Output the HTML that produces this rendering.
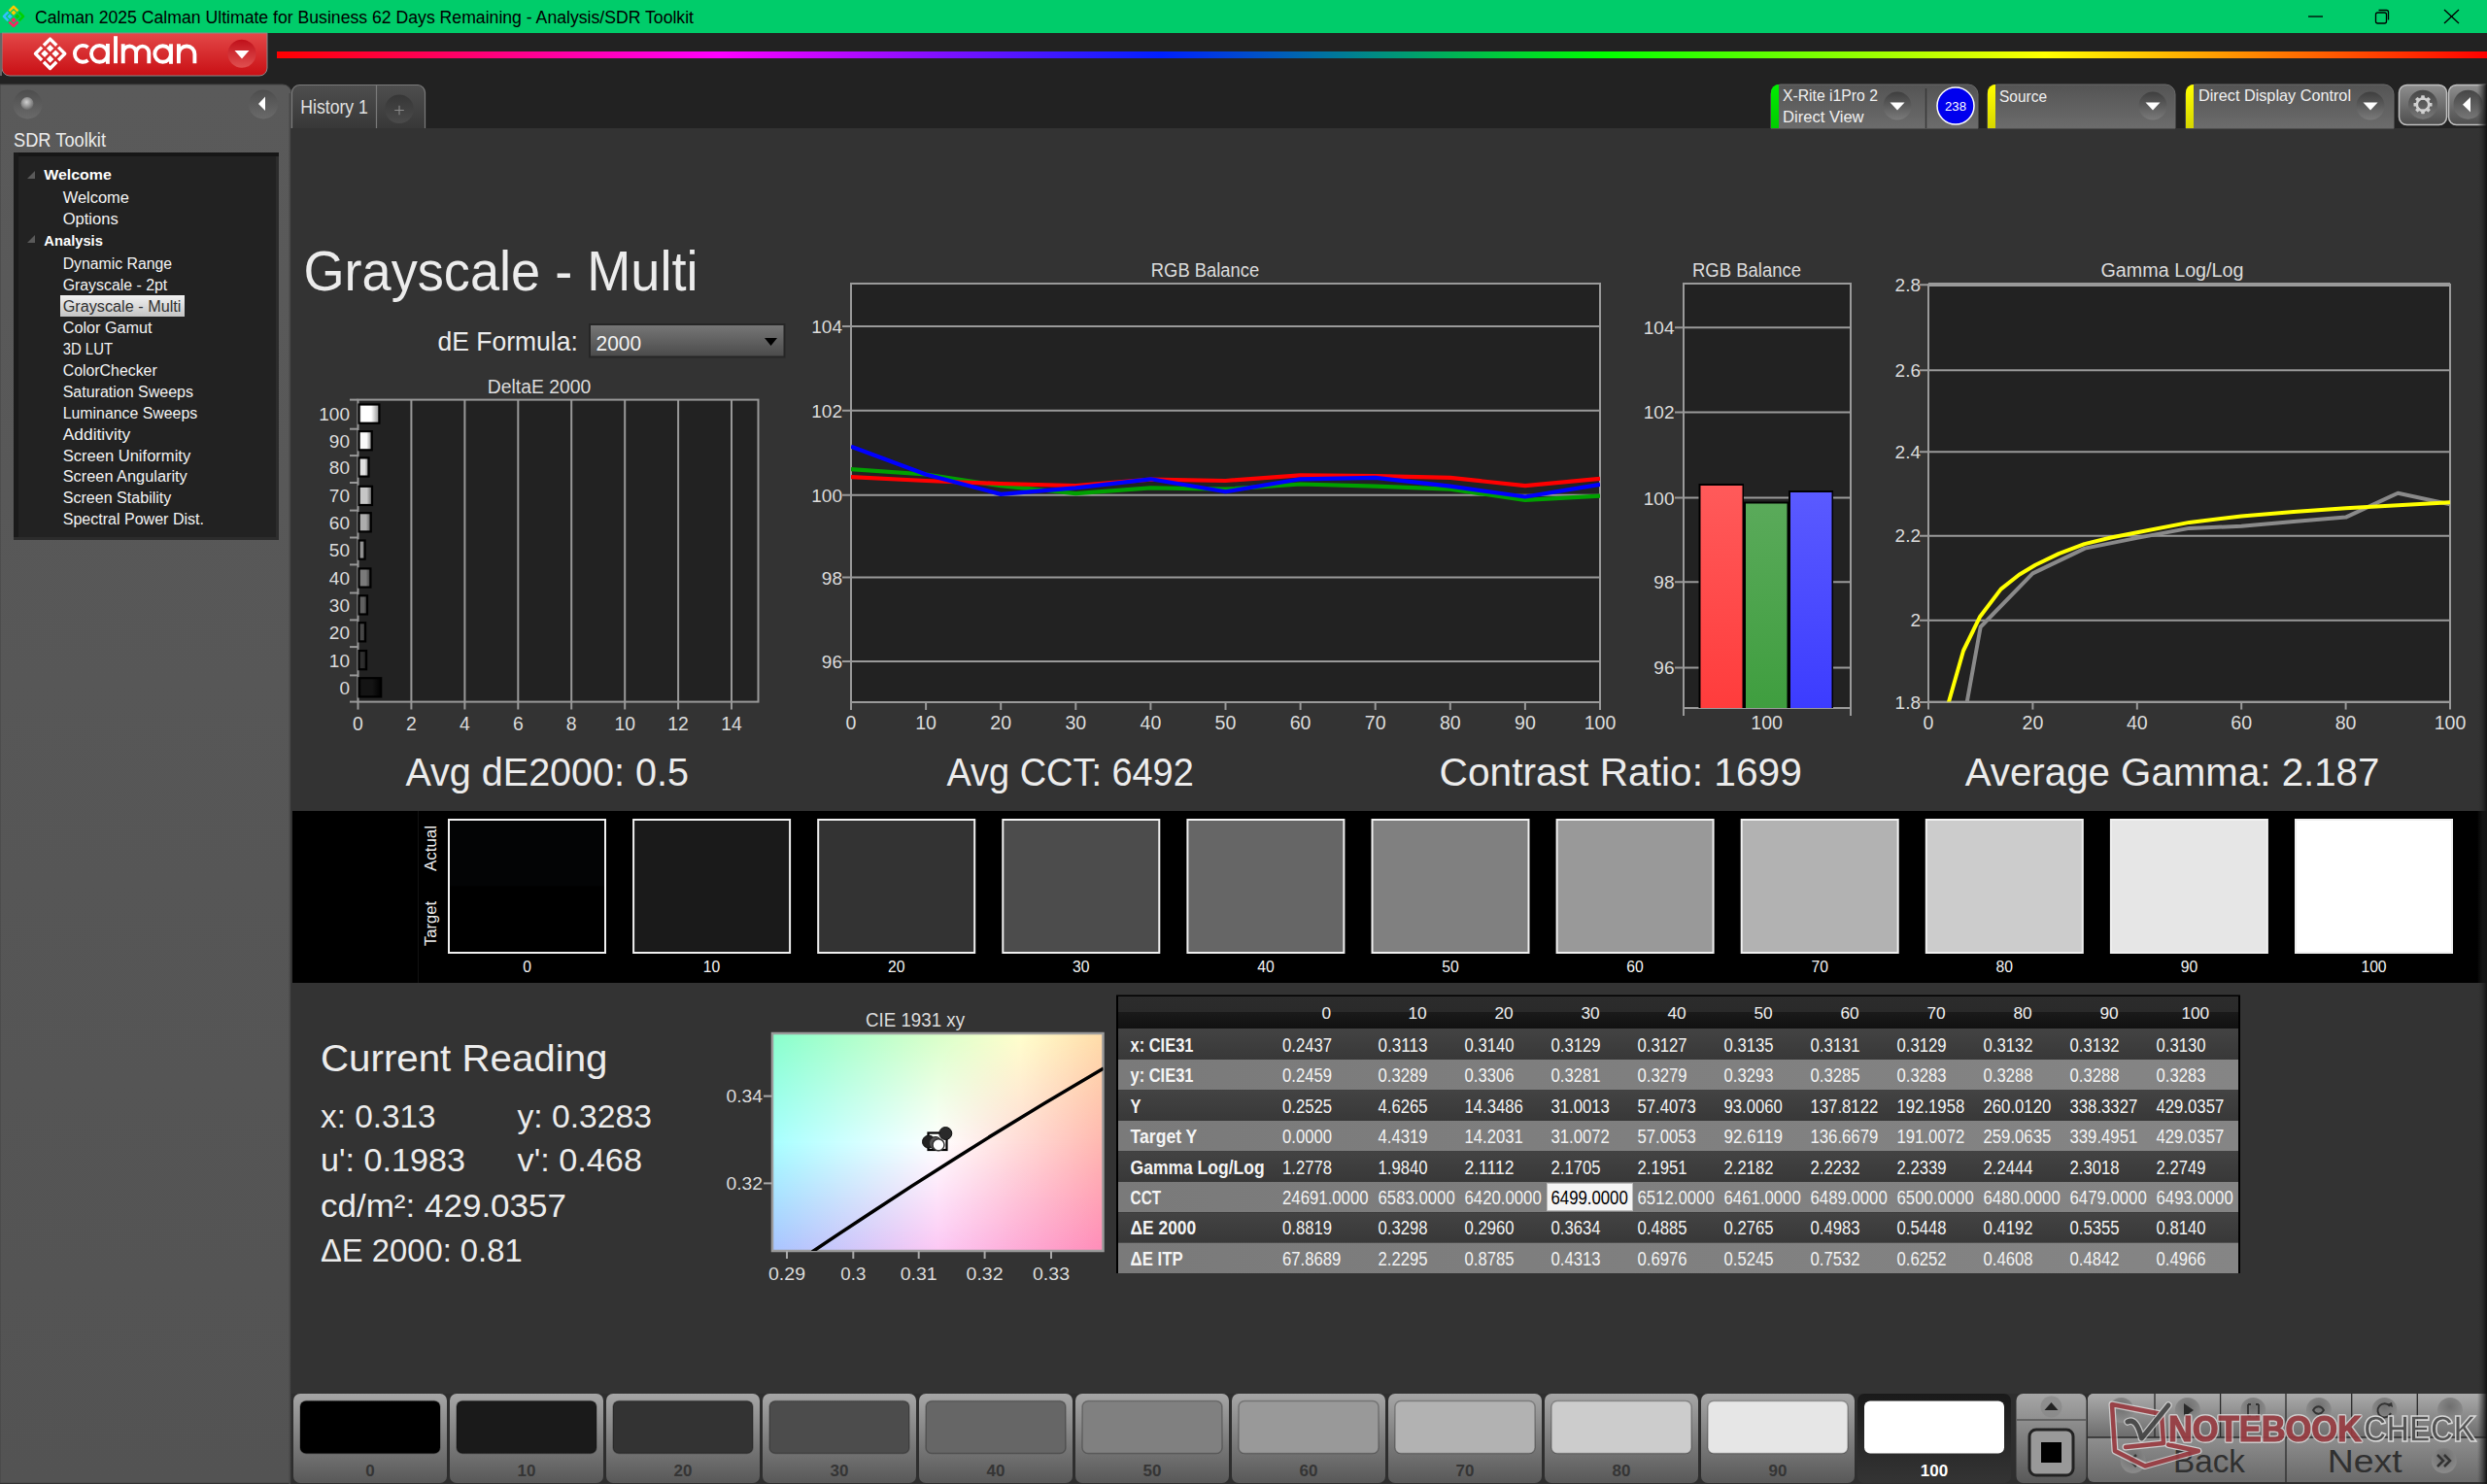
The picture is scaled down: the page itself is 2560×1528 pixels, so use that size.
<!DOCTYPE html>
<html><head><meta charset="utf-8"><title>Calman - Grayscale Multi</title>
<style>
html,body{margin:0;padding:0;background:#222;width:2560px;height:1528px;overflow:hidden}
svg{display:block;font-family:"Liberation Sans",sans-serif}
</style></head><body>
<svg width="2560" height="1528" viewBox="0 0 2560 1528">
<defs>
<linearGradient id="gLogo" x1="0" y1="0" x2="0" y2="1"><stop offset="0" stop-color="#e34848"/><stop offset="1" stop-color="#c90f14"/></linearGradient>
<linearGradient id="gLogoBtn" x1="0" y1="0" x2="0" y2="1"><stop offset="0" stop-color="#c0101a"/><stop offset="1" stop-color="#e05050"/></linearGradient>
<linearGradient id="gRainbow" x1="0" y1="0" x2="1" y2="0">
<stop offset="0" stop-color="#ff0000"/><stop offset="0.2" stop-color="#ff00ff"/><stop offset="0.4" stop-color="#0020ff"/>
<stop offset="0.6" stop-color="#00ff00"/><stop offset="0.8" stop-color="#ffff00"/><stop offset="1" stop-color="#ff0000"/></linearGradient>
<linearGradient id="gSide" x1="0" y1="0" x2="0" y2="1"><stop offset="0" stop-color="#5a5a5a"/><stop offset="1" stop-color="#535353"/></linearGradient>
<linearGradient id="gTab" x1="0" y1="0" x2="0" y2="1"><stop offset="0" stop-color="#4e4e4e"/><stop offset="1" stop-color="#383838"/></linearGradient>
<linearGradient id="gDev" x1="0" y1="0" x2="0" y2="1"><stop offset="0" stop-color="#545454"/><stop offset="1" stop-color="#6c6c6c"/></linearGradient>
<linearGradient id="gCirc" x1="0" y1="0" x2="0" y2="1"><stop offset="0" stop-color="#3e3e3e"/><stop offset="1" stop-color="#7a7a7a"/></linearGradient>
<linearGradient id="gCircL" x1="0" y1="0" x2="0" y2="1"><stop offset="0" stop-color="#4a4a4a"/><stop offset="1" stop-color="#6e6e6e"/></linearGradient>
<linearGradient id="gBtn" x1="0" y1="0" x2="0" y2="1"><stop offset="0" stop-color="#8e8e8e"/><stop offset="1" stop-color="#4e4e4e"/></linearGradient>
<linearGradient id="gHi" x1="0" y1="0" x2="0" y2="1"><stop offset="0" stop-color="#f2f2f2"/><stop offset="1" stop-color="#c4c4c4"/></linearGradient>
<linearGradient id="gDrop" x1="0" y1="0" x2="0" y2="1"><stop offset="0" stop-color="#777"/><stop offset="1" stop-color="#4a4a4a"/></linearGradient>
<linearGradient id="gTHead" x1="0" y1="0" x2="0" y2="1"><stop offset="0" stop-color="#2c2c2c"/><stop offset="0.48" stop-color="#2a2a2a"/><stop offset="0.5" stop-color="#1a1a1a"/><stop offset="1" stop-color="#111"/></linearGradient>
<linearGradient id="gRowD" x1="0" y1="0" x2="0" y2="1"><stop offset="0" stop-color="#434343"/><stop offset="1" stop-color="#383838"/></linearGradient>
<linearGradient id="gRowL" x1="0" y1="0" x2="1" y2="0"><stop offset="0" stop-color="#7a7a7a"/><stop offset="1" stop-color="#858585"/></linearGradient>
<linearGradient id="gBB" x1="0" y1="0" x2="0" y2="1"><stop offset="0" stop-color="#a6a6a6"/><stop offset="1" stop-color="#585858"/></linearGradient>
<linearGradient id="gBarR" x1="0" y1="0" x2="0" y2="1"><stop offset="0" stop-color="#ff5a5a"/><stop offset="1" stop-color="#ff3c3c"/></linearGradient>
<linearGradient id="gBarG" x1="0" y1="0" x2="0" y2="1"><stop offset="0" stop-color="#5aaa5a"/><stop offset="1" stop-color="#3f9e3f"/></linearGradient>
<linearGradient id="gBarB" x1="0" y1="0" x2="0" y2="1"><stop offset="0" stop-color="#5a5aff"/><stop offset="1" stop-color="#3c3cff"/></linearGradient>
<radialGradient id="gKnob" cx="0.45" cy="0.4" r="0.6"><stop offset="0" stop-color="#d0d0d0"/><stop offset="1" stop-color="#6a6a6a"/></radialGradient>
<linearGradient id="gPlus" x1="0" y1="0" x2="0" y2="1"><stop offset="0" stop-color="#363636"/><stop offset="1" stop-color="#4a4a4a"/></linearGradient>
<linearGradient id="gRS" x1="0" y1="0" x2="1" y2="0"><stop offset="0" stop-color="#333" stop-opacity="0"/><stop offset="1" stop-color="#111"/></linearGradient>
<linearGradient id="gYel" x1="0" y1="0" x2="0" y2="1"><stop offset="0" stop-color="#ffff00"/><stop offset="1" stop-color="#d6d600"/></linearGradient>
<linearGradient id="gGrn" x1="0" y1="0" x2="0" y2="1"><stop offset="0" stop-color="#00ee00"/><stop offset="1" stop-color="#00cc00"/></linearGradient>
<linearGradient id="gDe100" x1="0" y1="0" x2="1" y2="0"><stop offset="0" stop-color="rgb(140,140,140)"/><stop offset="0.12" stop-color="rgb(255,255,255)"/><stop offset="0.6" stop-color="rgb(255,255,255)"/><stop offset="1" stop-color="rgb(140,140,140)"/></linearGradient>
<linearGradient id="gDe90" x1="0" y1="0" x2="1" y2="0"><stop offset="0" stop-color="rgb(125,125,125)"/><stop offset="0.12" stop-color="rgb(249,249,249)"/><stop offset="0.6" stop-color="rgb(249,249,249)"/><stop offset="1" stop-color="rgb(125,125,125)"/></linearGradient>
<linearGradient id="gDe80" x1="0" y1="0" x2="1" y2="0"><stop offset="0" stop-color="rgb(112,112,112)"/><stop offset="0.12" stop-color="rgb(224,224,224)"/><stop offset="0.6" stop-color="rgb(224,224,224)"/><stop offset="1" stop-color="rgb(112,112,112)"/></linearGradient>
<linearGradient id="gDe70" x1="0" y1="0" x2="1" y2="0"><stop offset="0" stop-color="rgb(97,97,97)"/><stop offset="0.12" stop-color="rgb(198,198,198)"/><stop offset="0.6" stop-color="rgb(198,198,198)"/><stop offset="1" stop-color="rgb(97,97,97)"/></linearGradient>
<linearGradient id="gDe60" x1="0" y1="0" x2="1" y2="0"><stop offset="0" stop-color="rgb(84,84,84)"/><stop offset="0.12" stop-color="rgb(173,173,173)"/><stop offset="0.6" stop-color="rgb(173,173,173)"/><stop offset="1" stop-color="rgb(84,84,84)"/></linearGradient>
<linearGradient id="gDe50" x1="0" y1="0" x2="1" y2="0"><stop offset="0" stop-color="rgb(69,69,69)"/><stop offset="0.12" stop-color="rgb(147,147,147)"/><stop offset="0.6" stop-color="rgb(147,147,147)"/><stop offset="1" stop-color="rgb(69,69,69)"/></linearGradient>
<linearGradient id="gDe40" x1="0" y1="0" x2="1" y2="0"><stop offset="0" stop-color="rgb(56,56,56)"/><stop offset="0.12" stop-color="rgb(122,122,122)"/><stop offset="0.6" stop-color="rgb(122,122,122)"/><stop offset="1" stop-color="rgb(56,56,56)"/></linearGradient>
<linearGradient id="gDe30" x1="0" y1="0" x2="1" y2="0"><stop offset="0" stop-color="rgb(41,41,41)"/><stop offset="0.12" stop-color="rgb(96,96,96)"/><stop offset="0.6" stop-color="rgb(96,96,96)"/><stop offset="1" stop-color="rgb(41,41,41)"/></linearGradient>
<linearGradient id="gDe20" x1="0" y1="0" x2="1" y2="0"><stop offset="0" stop-color="rgb(28,28,28)"/><stop offset="0.12" stop-color="rgb(71,71,71)"/><stop offset="0.6" stop-color="rgb(71,71,71)"/><stop offset="1" stop-color="rgb(28,28,28)"/></linearGradient>
<linearGradient id="gDe10" x1="0" y1="0" x2="1" y2="0"><stop offset="0" stop-color="rgb(14,14,14)"/><stop offset="0.12" stop-color="rgb(46,46,46)"/><stop offset="0.6" stop-color="rgb(46,46,46)"/><stop offset="1" stop-color="rgb(14,14,14)"/></linearGradient>
<linearGradient id="gDe0" x1="0" y1="0" x2="1" y2="0"><stop offset="0" stop-color="rgb(0,0,0)"/><stop offset="0.12" stop-color="rgb(20,20,20)"/><stop offset="0.6" stop-color="rgb(20,20,20)"/><stop offset="1" stop-color="rgb(0,0,0)"/></linearGradient>
<linearGradient id="cieTop" x1="0" y1="0" x2="1" y2="0"><stop offset="0" stop-color="#88ffcc"/><stop offset="0.5" stop-color="#d8ffc8"/><stop offset="0.75" stop-color="#ffffcc"/><stop offset="1" stop-color="#ffdca8"/></linearGradient>
<linearGradient id="cieMid" x1="0" y1="0" x2="1" y2="0"><stop offset="0" stop-color="#a8ffff"/><stop offset="0.5" stop-color="#ffffff"/><stop offset="1" stop-color="#ffb8b0"/></linearGradient>
<linearGradient id="cieBot" x1="0" y1="0" x2="1" y2="0"><stop offset="0" stop-color="#a8c4ff"/><stop offset="0.5" stop-color="#fcc8f4"/><stop offset="1" stop-color="#ff8cb8"/></linearGradient>
<linearGradient id="mTop" x1="0" y1="0" x2="0" y2="1"><stop offset="0" stop-color="#fff"/><stop offset="0.5" stop-color="#000"/></linearGradient>
<linearGradient id="mBot" x1="0" y1="0" x2="0" y2="1"><stop offset="0.5" stop-color="#000"/><stop offset="1" stop-color="#fff"/></linearGradient>
<mask id="mkTop" maskUnits="userSpaceOnUse" x="795" y="1064" width="340.5" height="224"><rect x="795" y="1064" width="340.5" height="224" fill="url(#mTop)"/></mask>
<mask id="mkBot" maskUnits="userSpaceOnUse" x="795" y="1064" width="340.5" height="224"><rect x="795" y="1064" width="340.5" height="224" fill="url(#mBot)"/></mask>
<linearGradient id="gSel" x1="0" y1="0" x2="0" y2="1"><stop offset="0" stop-color="#1a1a1a"/><stop offset="1" stop-color="#343434"/></linearGradient>
<linearGradient id="gGU" x1="0" y1="0" x2="0" y2="1"><stop offset="0" stop-color="#ababab"/><stop offset="1" stop-color="#6c6c6c"/></linearGradient>
<linearGradient id="gGL" x1="0" y1="0" x2="0" y2="1"><stop offset="0" stop-color="#b2b2b2"/><stop offset="1" stop-color="#6a6a6a"/></linearGradient>
<radialGradient id="gIc" cx="0.5" cy="0.35" r="0.6"><stop offset="0" stop-color="#6a6a6a"/><stop offset="1" stop-color="#8c8c8c"/></radialGradient>
</defs>
<rect x="0" y="0" width="2560" height="1528" fill="#222222" />
<rect x="0" y="0" width="2560" height="34" fill="#00cc6a" />
<g transform="translate(14,16.9) rotate(45)">
<path d="M-0.8,-7.1000000000000005 H-7.1000000000000005 V-0.8" fill="none" stroke="#ffc800" stroke-width="2.6" stroke-linejoin="round"/>
<path d="M0.8,-7.1000000000000005 H7.1000000000000005 V-0.8" fill="none" stroke="#00d000" stroke-width="2.6" stroke-linejoin="round"/>
<path d="M7.1000000000000005,0.8 V7.1000000000000005 H0.8" fill="none" stroke="#ff2060" stroke-width="2.6" stroke-linejoin="round"/>
<path d="M-0.8,7.1000000000000005 H-7.1000000000000005 V0.8" fill="none" stroke="#30c0ff" stroke-width="2.6" stroke-linejoin="round"/>
<rect x="-4.60" y="-4.60" width="3.8" height="3.8" fill="#ffc800"/>
<rect x="0.80" y="-4.60" width="3.8" height="3.8" fill="#00d000"/>
<rect x="0.80" y="0.80" width="3.8" height="3.8" fill="#ff2060"/>
<rect x="-4.60" y="0.80" width="3.8" height="3.8" fill="#30c0ff"/>
</g>
<text x="36.0" y="23.7" font-size="18.7" fill="#000" textLength="678.0" lengthAdjust="spacingAndGlyphs" >Calman 2025 Calman Ultimate for Business 62 Days Remaining  - Analysis/SDR Toolkit</text>
<g stroke="#000" stroke-width="1.3" fill="none">
<line x1="2376" y1="17" x2="2391" y2="17"/>
<rect x="2445.5" y="13" width="11" height="11" rx="2"/><path d="M2448.5,10.5 h8 a2,2 0 0 1 2,2 v8"/>
<line x1="2516" y1="10" x2="2531" y2="24"/><line x1="2531" y1="10" x2="2516" y2="24"/>
</g>
<path d="M2,34 H275 V70 A8,8 0 0 1 267,78 H10 A8,8 0 0 1 2,70 Z" fill="url(#gLogo)" stroke="#8a8a8a" stroke-width="1"/>
<rect x="0" y="34" width="2" height="44" fill="#666" />
<g transform="translate(51.6,55.3) rotate(45)">
<path d="M-1.3,-10.700000000000001 H-10.700000000000001 V-1.3" fill="none" stroke="#fff" stroke-width="3.4" stroke-linejoin="round"/>
<path d="M1.3,-10.700000000000001 H10.700000000000001 V-1.3" fill="none" stroke="#fff" stroke-width="3.4" stroke-linejoin="round"/>
<path d="M10.700000000000001,1.3 V10.700000000000001 H1.3" fill="none" stroke="#fff" stroke-width="3.4" stroke-linejoin="round"/>
<path d="M-1.3,10.700000000000001 H-10.700000000000001 V1.3" fill="none" stroke="#fff" stroke-width="3.4" stroke-linejoin="round"/>
<rect x="-6.66" y="-6.66" width="5.4" height="5.4" fill="#fff"/>
<rect x="1.26" y="-6.66" width="5.4" height="5.4" fill="#fff"/>
<rect x="1.26" y="1.26" width="5.4" height="5.4" fill="#fff"/>
<rect x="-6.66" y="1.26" width="5.4" height="5.4" fill="#fff"/>
</g>
<g fill="none" stroke="#fff" stroke-width="3.9">
<path d="M90.6,48.7 A8.45,8.45 0 1 0 90.6,62.0"/>
<circle cx="102.45" cy="55.35" r="8.45"/><path d="M110.9,45 V65.8"/>
<path d="M119,37.2 V65.2"/>
<path d="M126.7,45.3 V65.2 M126.7,54.2 A6.7,6.7 0 0 1 140.1,54.2 V65.2 M140.1,54.2 A6.6,6.6 0 0 1 153.3,54.2 V65.2"/>
<circle cx="167.6" cy="55.5" r="8.3"/><path d="M176,45.3 V65.8"/>
<path d="M183.9,45.3 V65.2 M183.9,55.75 A8.25,8.25 0 0 1 200.4,55.75 V65.2"/>
</g>
<circle cx="249" cy="55.3" r="14.5" fill="url(#gLogoBtn)"/>
<path d="M241.5,52 h15 l-7.5,8.5 z" fill="#fff"/>
<rect x="285" y="53" width="2275" height="7" fill="url(#gRainbow)" />
<path d="M0,87 H291 A9,9 0 0 1 300,96 V1527 H0 Z" fill="url(#gSide)" stroke="#444" stroke-width="1"/>
<circle cx="28.5" cy="107.5" r="15" fill="url(#gCircL)" opacity="0.8"/>
<circle cx="28" cy="106.5" r="6.5" fill="url(#gKnob)"/>
<circle cx="271" cy="107.5" r="15" fill="url(#gCircL)" opacity="0.8"/>
<path d="M266,107 L273,99.5 V114 Z" fill="#fff"/>
<text x="14.0" y="151.0" font-size="20.3" fill="#ececec" textLength="95.0" lengthAdjust="spacingAndGlyphs" >SDR Toolkit</text>
<rect x="14" y="157" width="273" height="399" fill="#222222" />
<rect x="284" y="157" width="3" height="399" fill="#2c2c2c" />
<rect x="14" y="553" width="273" height="3" fill="#2c2c2c" />
<rect x="14" y="157" width="273" height="4" fill="#161616" />
<rect x="14" y="157" width="5" height="396" fill="#1a1a1a" />
<rect x="297.5" y="96" width="2" height="1432" fill="#484848" />
<rect x="299.5" y="132" width="1.5" height="1396" fill="#222" />
<path d="M28,184 L36,184 L36,176 Z" fill="#5a5a5a"/>
<path d="M28,250 L36,250 L36,242 Z" fill="#5a5a5a"/>
<text x="45.3" y="185.1" font-size="15.3" fill="#ffffff" font-weight="bold" textLength="69.5" lengthAdjust="spacingAndGlyphs" >Welcome</text>
<text x="45.3" y="253.0" font-size="15.3" fill="#ffffff" font-weight="bold" textLength="60.6" lengthAdjust="spacingAndGlyphs" >Analysis</text>
<rect x="62" y="304" width="128" height="22" fill="url(#gHi)" />
<text x="64.7" y="208.9" font-size="15.8" fill="#f4f4f4" textLength="68.3" lengthAdjust="spacingAndGlyphs" >Welcome</text>
<text x="64.7" y="231.2" font-size="15.8" fill="#f4f4f4" textLength="57.0" lengthAdjust="spacingAndGlyphs" >Options</text>
<text x="64.7" y="276.5" font-size="15.8" fill="#f4f4f4" textLength="112.4" lengthAdjust="spacingAndGlyphs" >Dynamic Range</text>
<text x="64.7" y="298.6" font-size="15.8" fill="#f4f4f4" textLength="107.5" lengthAdjust="spacingAndGlyphs" >Grayscale - 2pt</text>
<text x="64.7" y="321.1" font-size="15.8" fill="#303030" textLength="121.7" lengthAdjust="spacingAndGlyphs" >Grayscale - Multi</text>
<text x="64.7" y="342.8" font-size="15.8" fill="#f4f4f4" textLength="91.9" lengthAdjust="spacingAndGlyphs" >Color Gamut</text>
<text x="64.7" y="364.9" font-size="15.8" fill="#f4f4f4" textLength="51.3" lengthAdjust="spacingAndGlyphs" >3D LUT</text>
<text x="64.7" y="386.8" font-size="15.8" fill="#f4f4f4" textLength="97.0" lengthAdjust="spacingAndGlyphs" >ColorChecker</text>
<text x="64.7" y="408.9" font-size="15.8" fill="#f4f4f4" textLength="134.3" lengthAdjust="spacingAndGlyphs" >Saturation Sweeps</text>
<text x="64.7" y="430.6" font-size="15.8" fill="#f4f4f4" textLength="138.5" lengthAdjust="spacingAndGlyphs" >Luminance Sweeps</text>
<text x="64.7" y="452.6" font-size="15.8" fill="#f4f4f4" textLength="69.6" lengthAdjust="spacingAndGlyphs" >Additivity</text>
<text x="64.7" y="474.5" font-size="15.8" fill="#f4f4f4" textLength="131.5" lengthAdjust="spacingAndGlyphs" >Screen Uniformity</text>
<text x="64.7" y="496.2" font-size="15.8" fill="#f4f4f4" textLength="128.1" lengthAdjust="spacingAndGlyphs" >Screen Angularity</text>
<text x="64.7" y="517.9" font-size="15.8" fill="#f4f4f4" textLength="111.7" lengthAdjust="spacingAndGlyphs" >Screen Stability</text>
<text x="64.7" y="540.0" font-size="15.8" fill="#f4f4f4" textLength="145.3" lengthAdjust="spacingAndGlyphs" >Spectral Power Dist.</text>
<path d="M300.5,132 V95 A8,8 0 0 1 308.5,87.5 H430 A8,8 0 0 1 437.5,95 V132" fill="url(#gTab)" stroke="#7a7a7a" stroke-width="1.2"/>
<line x1="387.5" y1="88" x2="387.5" y2="132" stroke="#7a7a7a" stroke-width="1.2"/>
<text x="309.3" y="117.3" font-size="19.6" fill="#e0e0e0" textLength="69.5" lengthAdjust="spacingAndGlyphs" >History 1</text>
<circle cx="411" cy="112.2" r="14.8" fill="url(#gPlus)"/>
<path d="M406.2,113.5 h9.6 M411,108.7 v9.6" stroke="#8a8a8a" stroke-width="1.1"/>
<rect x="300" y="132" width="2260" height="1396" fill="#333333" />
<path d="M1823,132 V97 A10,10 0 0 1 1833,87 H2026 A10,10 0 0 1 2036,97 V132 Z" fill="url(#gDev)" stroke="#6a6a6a" stroke-width="1"/>
<path d="M1823,132 V95 A8,8 0 0 1 1831,87 V132 Z" fill="url(#gGrn)"/>
<text x="1835.0" y="104.0" font-size="16.6" fill="#f0f0f0" textLength="98.0" lengthAdjust="spacingAndGlyphs" >X-Rite i1Pro 2</text>
<text x="1835.0" y="125.7" font-size="16.6" fill="#f0f0f0" textLength="83.6" lengthAdjust="spacingAndGlyphs" >Direct View</text>
<circle cx="1953" cy="109" r="14.5" fill="url(#gCirc)"/>
<path d="M1945.5,105.5 h15 l-7.5,8 z" fill="#fff"/>
<line x1="1982.5" y1="91" x2="1982.5" y2="132" stroke="#3a3a3a" stroke-width="1.5"/>
<circle cx="2013" cy="109" r="19" fill="#0000ee" stroke="#fff" stroke-width="1.5"/>
<text x="2013.0" y="113.7" font-size="12.6" fill="#fff" text-anchor="middle" textLength="22.0" lengthAdjust="spacingAndGlyphs" >238</text>
<path d="M2046,132 V97 A10,10 0 0 1 2056,87 H2229 A10,10 0 0 1 2239,97 V132 Z" fill="url(#gDev)" stroke="#6a6a6a" stroke-width="1"/>
<path d="M2046,132 V95 A8,8 0 0 1 2054,87 V132 Z" fill="url(#gYel)"/>
<text x="2058.0" y="104.5" font-size="16.6" fill="#f0f0f0" textLength="49.0" lengthAdjust="spacingAndGlyphs" >Source</text>
<circle cx="2216" cy="109" r="14.5" fill="url(#gCirc)"/>
<path d="M2208.5,105.5 h15 l-7.5,8 z" fill="#fff"/>
<path d="M2250,132 V97 A10,10 0 0 1 2260,87 H2454 A10,10 0 0 1 2464,97 V132 Z" fill="url(#gDev)" stroke="#6a6a6a" stroke-width="1"/>
<path d="M2250,132 V95 A8,8 0 0 1 2258,87 V132 Z" fill="url(#gYel)"/>
<text x="2263.0" y="103.8" font-size="16.6" fill="#f0f0f0" textLength="157.0" lengthAdjust="spacingAndGlyphs" >Direct Display Control</text>
<circle cx="2440" cy="109" r="14.5" fill="url(#gCirc)"/>
<path d="M2432.5,105.5 h15 l-7.5,8 z" fill="#fff"/>
<rect x="2469.5" y="87.5" width="49" height="41" rx="8" fill="url(#gBtn)" stroke="#c0c0c0" stroke-width="1.5"/>
<circle cx="2494" cy="107.7" r="15" fill="url(#gCirc)" opacity="0.9"/>
<g transform="translate(2494,107.7)" fill="#d0d0d0"><rect x="-1.8" y="-9.5" width="3.6" height="4.5" rx="0.6" transform="rotate(0)"/><rect x="-1.8" y="-9.5" width="3.6" height="4.5" rx="0.6" transform="rotate(45)"/><rect x="-1.8" y="-9.5" width="3.6" height="4.5" rx="0.6" transform="rotate(90)"/><rect x="-1.8" y="-9.5" width="3.6" height="4.5" rx="0.6" transform="rotate(135)"/><rect x="-1.8" y="-9.5" width="3.6" height="4.5" rx="0.6" transform="rotate(180)"/><rect x="-1.8" y="-9.5" width="3.6" height="4.5" rx="0.6" transform="rotate(225)"/><rect x="-1.8" y="-9.5" width="3.6" height="4.5" rx="0.6" transform="rotate(270)"/><rect x="-1.8" y="-9.5" width="3.6" height="4.5" rx="0.6" transform="rotate(315)"/><circle r="6.2" fill="none" stroke="#d0d0d0" stroke-width="2.6"/></g>
<rect x="2520.5" y="87.5" width="45" height="41" rx="8" fill="url(#gBtn)" stroke="#c0c0c0" stroke-width="1.5"/>
<circle cx="2540.5" cy="107.7" r="15" fill="url(#gCirc)" opacity="0.9"/>
<path d="M2535,107.7 L2543,100 V115.4 Z" fill="#fff"/>
<text x="312.5" y="298.5" font-size="58.0" fill="#ececec" textLength="406.0" lengthAdjust="spacingAndGlyphs" >Grayscale - Multi</text>
<text x="450.5" y="360.8" font-size="28.3" fill="#ececec" textLength="144.3" lengthAdjust="spacingAndGlyphs" >dE Formula:</text>
<rect x="607" y="334" width="200.5" height="33.5" fill="url(#gDrop)" stroke="#262626" stroke-width="2"/>
<text x="613.6" y="361.0" font-size="21.5" fill="#f2f2f2" textLength="46.5" lengthAdjust="spacingAndGlyphs" >2000</text>
<path d="M787,348 h13 l-6.5,8 z" fill="#000"/>
<text x="555.0" y="405.0" font-size="19.6" fill="#dcdcdc" text-anchor="middle" textLength="106.6" lengthAdjust="spacingAndGlyphs" >DeltaE 2000</text>
<rect x="368.5" y="411.6" width="412.0" height="311.0" fill="#222222" />
<line x1="423.4" y1="411.6" x2="423.4" y2="730.6" stroke="#999" stroke-width="2"/>
<line x1="478.4" y1="411.6" x2="478.4" y2="730.6" stroke="#999" stroke-width="2"/>
<line x1="533.3" y1="411.6" x2="533.3" y2="730.6" stroke="#999" stroke-width="2"/>
<line x1="588.2" y1="411.6" x2="588.2" y2="730.6" stroke="#999" stroke-width="2"/>
<line x1="643.2" y1="411.6" x2="643.2" y2="730.6" stroke="#999" stroke-width="2"/>
<line x1="698.1" y1="411.6" x2="698.1" y2="730.6" stroke="#999" stroke-width="2"/>
<line x1="753.0" y1="411.6" x2="753.0" y2="730.6" stroke="#999" stroke-width="2"/>
<rect x="368.5" y="411.6" width="412.0" height="311.0" fill="none" stroke="#999" stroke-width="2"/>
<line x1="368.5" y1="722.6" x2="368.5" y2="730.6" stroke="#999" stroke-width="2"/>
<line x1="360" y1="411.6" x2="368.5" y2="411.6" stroke="#999" stroke-width="2"/>
<line x1="360" y1="441.7" x2="368.5" y2="441.7" stroke="#999" stroke-width="2"/>
<line x1="360" y1="469.1" x2="368.5" y2="469.1" stroke="#999" stroke-width="2"/>
<line x1="360" y1="497.0" x2="368.5" y2="497.0" stroke="#999" stroke-width="2"/>
<line x1="360" y1="525.6" x2="368.5" y2="525.6" stroke="#999" stroke-width="2"/>
<line x1="360" y1="553.5" x2="368.5" y2="553.5" stroke="#999" stroke-width="2"/>
<line x1="360" y1="581.4" x2="368.5" y2="581.4" stroke="#999" stroke-width="2"/>
<line x1="360" y1="610.5" x2="368.5" y2="610.5" stroke="#999" stroke-width="2"/>
<line x1="360" y1="638.4" x2="368.5" y2="638.4" stroke="#999" stroke-width="2"/>
<line x1="360" y1="666.1" x2="368.5" y2="666.1" stroke="#999" stroke-width="2"/>
<line x1="360" y1="695.4" x2="368.5" y2="695.4" stroke="#999" stroke-width="2"/>
<line x1="360" y1="722.6" x2="368.5" y2="722.6" stroke="#999" stroke-width="2"/>
<text x="360.0" y="433.1" font-size="19.0" fill="#dcdcdc" text-anchor="end" >100</text>
<rect x="369.5" y="416.5" width="20.9" height="19.2" fill="url(#gDe100)" stroke="#000" stroke-width="2.2"/>
<text x="360.0" y="460.8" font-size="19.0" fill="#dcdcdc" text-anchor="end" >90</text>
<rect x="369.5" y="444.1" width="13.2" height="19.2" fill="url(#gDe90)" stroke="#000" stroke-width="2.2"/>
<text x="360.0" y="488.0" font-size="19.0" fill="#dcdcdc" text-anchor="end" >80</text>
<rect x="369.5" y="471.4" width="10.0" height="19.2" fill="url(#gDe80)" stroke="#000" stroke-width="2.2"/>
<text x="360.0" y="517.4" font-size="19.0" fill="#dcdcdc" text-anchor="end" >70</text>
<rect x="369.5" y="500.8" width="13.5" height="19.2" fill="url(#gDe70)" stroke="#000" stroke-width="2.2"/>
<text x="360.0" y="544.9" font-size="19.0" fill="#dcdcdc" text-anchor="end" >60</text>
<rect x="369.5" y="528.2" width="12.2" height="19.2" fill="url(#gDe60)" stroke="#000" stroke-width="2.2"/>
<text x="360.0" y="573.1" font-size="19.0" fill="#dcdcdc" text-anchor="end" >50</text>
<rect x="369.5" y="556.5" width="6.1" height="19.2" fill="url(#gDe50)" stroke="#000" stroke-width="2.2"/>
<text x="360.0" y="602.0" font-size="19.0" fill="#dcdcdc" text-anchor="end" >40</text>
<rect x="369.5" y="585.4" width="11.9" height="19.2" fill="url(#gDe40)" stroke="#000" stroke-width="2.2"/>
<text x="360.0" y="629.9" font-size="19.0" fill="#dcdcdc" text-anchor="end" >30</text>
<rect x="369.5" y="613.3" width="8.5" height="19.2" fill="url(#gDe30)" stroke="#000" stroke-width="2.2"/>
<text x="360.0" y="657.8" font-size="19.0" fill="#dcdcdc" text-anchor="end" >20</text>
<rect x="369.5" y="641.2" width="6.6" height="19.2" fill="url(#gDe20)" stroke="#000" stroke-width="2.2"/>
<text x="360.0" y="686.6" font-size="19.0" fill="#dcdcdc" text-anchor="end" >10</text>
<rect x="369.5" y="670.0" width="7.6" height="19.2" fill="url(#gDe10)" stroke="#000" stroke-width="2.2"/>
<text x="360.0" y="714.8" font-size="19.0" fill="#dcdcdc" text-anchor="end" >0</text>
<rect x="369.5" y="698.2" width="22.7" height="19.2" fill="url(#gDe0)" stroke="#000" stroke-width="2.2"/>
<text x="368.5" y="751.7" font-size="19.4" fill="#dcdcdc" text-anchor="middle" >0</text>
<text x="423.4" y="751.7" font-size="19.4" fill="#dcdcdc" text-anchor="middle" >2</text>
<text x="478.4" y="751.7" font-size="19.4" fill="#dcdcdc" text-anchor="middle" >4</text>
<text x="533.3" y="751.7" font-size="19.4" fill="#dcdcdc" text-anchor="middle" >6</text>
<text x="588.2" y="751.7" font-size="19.4" fill="#dcdcdc" text-anchor="middle" >8</text>
<text x="643.2" y="751.7" font-size="19.4" fill="#dcdcdc" text-anchor="middle" >10</text>
<text x="698.1" y="751.7" font-size="19.4" fill="#dcdcdc" text-anchor="middle" >12</text>
<text x="753.0" y="751.7" font-size="19.4" fill="#dcdcdc" text-anchor="middle" >14</text>
<text x="1240.5" y="285.3" font-size="19.6" fill="#dcdcdc" text-anchor="middle" textLength="111.4" lengthAdjust="spacingAndGlyphs" >RGB Balance</text>
<rect x="876" y="292" width="771" height="431" fill="#222222" />
<line x1="867" y1="336.0" x2="1647" y2="336.0" stroke="#9a9a9a" stroke-width="2"/>
<text x="867.0" y="343.0" font-size="19.0" fill="#dcdcdc" text-anchor="end" >104</text>
<line x1="867" y1="422.7" x2="1647" y2="422.7" stroke="#9a9a9a" stroke-width="2"/>
<text x="867.0" y="429.7" font-size="19.0" fill="#dcdcdc" text-anchor="end" >102</text>
<line x1="867" y1="509.8" x2="1647" y2="509.8" stroke="#9a9a9a" stroke-width="2"/>
<text x="867.0" y="516.8" font-size="19.0" fill="#dcdcdc" text-anchor="end" >100</text>
<line x1="867" y1="594.5" x2="1647" y2="594.5" stroke="#9a9a9a" stroke-width="2"/>
<text x="867.0" y="601.5" font-size="19.0" fill="#dcdcdc" text-anchor="end" >98</text>
<line x1="867" y1="681.0" x2="1647" y2="681.0" stroke="#9a9a9a" stroke-width="2"/>
<text x="867.0" y="688.0" font-size="19.0" fill="#dcdcdc" text-anchor="end" >96</text>
<rect x="876" y="292" width="771" height="431" fill="none" stroke="#9a9a9a" stroke-width="2"/>
<line x1="876.0" y1="723" x2="876.0" y2="731" stroke="#9a9a9a" stroke-width="2"/>
<text x="876.0" y="751.4" font-size="19.6" fill="#dcdcdc" text-anchor="middle" >0</text>
<line x1="953.1" y1="723" x2="953.1" y2="731" stroke="#9a9a9a" stroke-width="2"/>
<text x="953.1" y="751.4" font-size="19.6" fill="#dcdcdc" text-anchor="middle" >10</text>
<line x1="1030.2" y1="723" x2="1030.2" y2="731" stroke="#9a9a9a" stroke-width="2"/>
<text x="1030.2" y="751.4" font-size="19.6" fill="#dcdcdc" text-anchor="middle" >20</text>
<line x1="1107.3" y1="723" x2="1107.3" y2="731" stroke="#9a9a9a" stroke-width="2"/>
<text x="1107.3" y="751.4" font-size="19.6" fill="#dcdcdc" text-anchor="middle" >30</text>
<line x1="1184.4" y1="723" x2="1184.4" y2="731" stroke="#9a9a9a" stroke-width="2"/>
<text x="1184.4" y="751.4" font-size="19.6" fill="#dcdcdc" text-anchor="middle" >40</text>
<line x1="1261.5" y1="723" x2="1261.5" y2="731" stroke="#9a9a9a" stroke-width="2"/>
<text x="1261.5" y="751.4" font-size="19.6" fill="#dcdcdc" text-anchor="middle" >50</text>
<line x1="1338.6" y1="723" x2="1338.6" y2="731" stroke="#9a9a9a" stroke-width="2"/>
<text x="1338.6" y="751.4" font-size="19.6" fill="#dcdcdc" text-anchor="middle" >60</text>
<line x1="1415.7" y1="723" x2="1415.7" y2="731" stroke="#9a9a9a" stroke-width="2"/>
<text x="1415.7" y="751.4" font-size="19.6" fill="#dcdcdc" text-anchor="middle" >70</text>
<line x1="1492.8" y1="723" x2="1492.8" y2="731" stroke="#9a9a9a" stroke-width="2"/>
<text x="1492.8" y="751.4" font-size="19.6" fill="#dcdcdc" text-anchor="middle" >80</text>
<line x1="1569.9" y1="723" x2="1569.9" y2="731" stroke="#9a9a9a" stroke-width="2"/>
<text x="1569.9" y="751.4" font-size="19.6" fill="#dcdcdc" text-anchor="middle" >90</text>
<line x1="1647.0" y1="723" x2="1647.0" y2="731" stroke="#9a9a9a" stroke-width="2"/>
<text x="1647.0" y="751.4" font-size="19.6" fill="#dcdcdc" text-anchor="middle" >100</text>
<clipPath id="cpL"><rect x="876" y="292" width="771" height="431"/></clipPath>
<polyline points="876.0,483.2 953.1,488.5 1030.2,500.2 1107.3,508.1 1184.4,502.4 1261.5,503.7 1338.6,498.5 1415.7,500.7 1492.8,503.7 1569.9,514.9 1647.0,510.6" fill="none" stroke="#00a000" stroke-width="4.2" stroke-linejoin="round" clip-path="url(#cpL)"/>
<polyline points="876.0,491.1 953.1,495.0 1030.2,498.0 1107.3,500.2 1184.4,493.7 1261.5,495.0 1338.6,489.3 1415.7,490.2 1492.8,491.9 1569.9,500.2 1647.0,492.8" fill="none" stroke="#ff0000" stroke-width="4.2" stroke-linejoin="round" clip-path="url(#cpL)"/>
<polyline points="876.0,459.7 953.1,488.5 1030.2,508.9 1107.3,502.4 1184.4,493.3 1261.5,506.3 1338.6,493.3 1415.7,491.9 1492.8,500.7 1569.9,511.5 1647.0,498.9" fill="none" stroke="#0000ff" stroke-width="4.2" stroke-linejoin="round" clip-path="url(#cpL)"/>
<text x="1798.0" y="285.3" font-size="19.6" fill="#dcdcdc" text-anchor="middle" textLength="112.0" lengthAdjust="spacingAndGlyphs" >RGB Balance</text>
<rect x="1733" y="292" width="172" height="437" fill="#222222" />
<line x1="1724" y1="337.2" x2="1905" y2="337.2" stroke="#9a9a9a" stroke-width="2"/>
<text x="1723.5" y="344.2" font-size="19.0" fill="#dcdcdc" text-anchor="end" >104</text>
<line x1="1724" y1="424.4" x2="1905" y2="424.4" stroke="#9a9a9a" stroke-width="2"/>
<text x="1723.5" y="431.4" font-size="19.0" fill="#dcdcdc" text-anchor="end" >102</text>
<line x1="1724" y1="512.6" x2="1905" y2="512.6" stroke="#9a9a9a" stroke-width="2"/>
<text x="1723.5" y="519.6" font-size="19.0" fill="#dcdcdc" text-anchor="end" >100</text>
<line x1="1724" y1="599.2" x2="1905" y2="599.2" stroke="#9a9a9a" stroke-width="2"/>
<text x="1723.5" y="606.2" font-size="19.0" fill="#dcdcdc" text-anchor="end" >98</text>
<line x1="1724" y1="687.4" x2="1905" y2="687.4" stroke="#9a9a9a" stroke-width="2"/>
<text x="1723.5" y="694.4" font-size="19.0" fill="#dcdcdc" text-anchor="end" >96</text>
<rect x="1733" y="292" width="172" height="437" fill="none" stroke="#9a9a9a" stroke-width="2"/>
<line x1="1733" y1="729" x2="1733" y2="737" stroke="#9a9a9a" stroke-width="2"/>
<line x1="1905" y1="729" x2="1905" y2="737" stroke="#9a9a9a" stroke-width="2"/>
<text x="1818.6" y="751.4" font-size="19.6" fill="#dcdcdc" text-anchor="middle" >100</text>
<rect x="1748.5" y="498" width="46.5" height="231" fill="#000"/>
<rect x="1750.5" y="500" width="43.0" height="229" fill="url(#gBarR)"/>
<rect x="1795" y="516.5" width="46" height="212.5" fill="#000"/>
<rect x="1797" y="518.5" width="42.5" height="210.5" fill="url(#gBarG)"/>
<rect x="1841" y="505" width="46" height="224" fill="#000"/>
<rect x="1843" y="507" width="42.5" height="222" fill="url(#gBarB)"/>
<text x="2236.0" y="285.3" font-size="19.6" fill="#dcdcdc" text-anchor="middle" textLength="147.0" lengthAdjust="spacingAndGlyphs" >Gamma Log/Log</text>
<rect x="1985" y="293" width="537" height="429.6" fill="#222222" />
<line x1="1976" y1="638.8" x2="2522" y2="638.8" stroke="#9a9a9a" stroke-width="2"/>
<text x="1977.0" y="645.3" font-size="19.0" fill="#dcdcdc" text-anchor="end" >2</text>
<line x1="1976" y1="551.8" x2="2522" y2="551.8" stroke="#9a9a9a" stroke-width="2"/>
<text x="1977.0" y="558.3" font-size="19.0" fill="#dcdcdc" text-anchor="end" >2.2</text>
<line x1="1976" y1="465.2" x2="2522" y2="465.2" stroke="#9a9a9a" stroke-width="2"/>
<text x="1977.0" y="471.7" font-size="19.0" fill="#dcdcdc" text-anchor="end" >2.4</text>
<line x1="1976" y1="381.2" x2="2522" y2="381.2" stroke="#9a9a9a" stroke-width="2"/>
<text x="1977.0" y="387.7" font-size="19.0" fill="#dcdcdc" text-anchor="end" >2.6</text>
<line x1="1976" y1="293.3" x2="2522" y2="293.3" stroke="#9a9a9a" stroke-width="2"/>
<text x="1977.0" y="299.8" font-size="19.0" fill="#dcdcdc" text-anchor="end" >2.8</text>
<line x1="1976" y1="723.0" x2="2522" y2="723.0" stroke="#9a9a9a" stroke-width="2"/>
<text x="1977.0" y="729.5" font-size="19.0" fill="#dcdcdc" text-anchor="end" >1.8</text>
<rect x="1985" y="293" width="537" height="429.6" fill="none" stroke="#9a9a9a" stroke-width="2"/>
<line x1="1985" y1="293" x2="2522" y2="293" stroke="#9a9a9a" stroke-width="4"/>
<line x1="1985.0" y1="722.6" x2="1985.0" y2="730.6" stroke="#9a9a9a" stroke-width="2"/>
<text x="1985.0" y="751.4" font-size="19.6" fill="#dcdcdc" text-anchor="middle" >0</text>
<line x1="2092.4" y1="722.6" x2="2092.4" y2="730.6" stroke="#9a9a9a" stroke-width="2"/>
<text x="2092.4" y="751.4" font-size="19.6" fill="#dcdcdc" text-anchor="middle" >20</text>
<line x1="2199.8" y1="722.6" x2="2199.8" y2="730.6" stroke="#9a9a9a" stroke-width="2"/>
<text x="2199.8" y="751.4" font-size="19.6" fill="#dcdcdc" text-anchor="middle" >40</text>
<line x1="2307.2" y1="722.6" x2="2307.2" y2="730.6" stroke="#9a9a9a" stroke-width="2"/>
<text x="2307.2" y="751.4" font-size="19.6" fill="#dcdcdc" text-anchor="middle" >60</text>
<line x1="2414.6" y1="722.6" x2="2414.6" y2="730.6" stroke="#9a9a9a" stroke-width="2"/>
<text x="2414.6" y="751.4" font-size="19.6" fill="#dcdcdc" text-anchor="middle" >80</text>
<line x1="2522.0" y1="722.6" x2="2522.0" y2="730.6" stroke="#9a9a9a" stroke-width="2"/>
<text x="2522.0" y="751.4" font-size="19.6" fill="#dcdcdc" text-anchor="middle" >100</text>
<clipPath id="cpG"><rect x="1985" y="293" width="537" height="429.6"/></clipPath>
<polyline points="1985.0,942.8 2038.7,645.5 2092.4,590.4 2146.1,564.6 2199.8,553.9 2253.5,543.9 2307.2,541.8 2360.9,537.1 2414.6,532.6 2468.3,507.7 2522.0,519.4" fill="none" stroke="#8a8a8a" stroke-width="4" stroke-linejoin="round" clip-path="url(#cpG)"/>
<polyline points="2000.0,765.1 2005.9,723.0 2021.0,670.0 2037.9,635.3 2059.6,606.6 2078.4,591.8 2095.1,581.8 2119.2,570.1 2145.6,560.1 2172.9,553.5 2199.8,548.3 2253.5,537.9 2307.2,531.4 2360.9,527.1 2414.6,523.2 2468.3,520.2 2522.0,517.2" fill="none" stroke="#ffff00" stroke-width="4" stroke-linejoin="round" clip-path="url(#cpG)"/>
<text x="417.4" y="808.9" font-size="40.7" fill="#ececec" textLength="291.6" lengthAdjust="spacingAndGlyphs" >Avg dE2000: 0.5</text>
<text x="974.5" y="808.9" font-size="40.7" fill="#ececec" textLength="254.3" lengthAdjust="spacingAndGlyphs" >Avg CCT: 6492</text>
<text x="1481.6" y="808.9" font-size="40.7" fill="#ececec" textLength="373.2" lengthAdjust="spacingAndGlyphs" >Contrast Ratio: 1699</text>
<text x="2022.7" y="808.9" font-size="40.7" fill="#ececec" textLength="426.7" lengthAdjust="spacingAndGlyphs" >Average Gamma: 2.187</text>
<rect x="301" y="835" width="2259" height="177" fill="#000000" />
<rect x="430" y="835" width="1" height="177" fill="#111" />
<text transform="translate(449,897) rotate(-90)" font-size="17" fill="#f0f0f0" textLength="47" lengthAdjust="spacingAndGlyphs">Actual</text>
<text transform="translate(449,974) rotate(-90)" font-size="17" fill="#f0f0f0" textLength="46" lengthAdjust="spacingAndGlyphs">Target</text>
<rect x="462.0" y="844" width="161" height="137" fill="#030405" stroke="#f0f0f0" stroke-width="2"/>
<rect x="463.0" y="912.5" width="159" height="67.5" fill="#000"/>
<text x="542.5" y="1001.1" font-size="15.7" fill="#f4f4f4" text-anchor="middle" >0</text>
<rect x="652.1" y="844" width="161" height="137" fill="rgb(26,26,26)" stroke="#f0f0f0" stroke-width="2"/>
<text x="732.6" y="1001.1" font-size="15.7" fill="#f4f4f4" text-anchor="middle" >10</text>
<rect x="842.2" y="844" width="161" height="137" fill="rgb(51,51,51)" stroke="#f0f0f0" stroke-width="2"/>
<text x="922.7" y="1001.1" font-size="15.7" fill="#f4f4f4" text-anchor="middle" >20</text>
<rect x="1032.3" y="844" width="161" height="137" fill="rgb(76,76,76)" stroke="#f0f0f0" stroke-width="2"/>
<text x="1112.8" y="1001.1" font-size="15.7" fill="#f4f4f4" text-anchor="middle" >30</text>
<rect x="1222.4" y="844" width="161" height="137" fill="rgb(102,102,102)" stroke="#f0f0f0" stroke-width="2"/>
<text x="1302.9" y="1001.1" font-size="15.7" fill="#f4f4f4" text-anchor="middle" >40</text>
<rect x="1412.5" y="844" width="161" height="137" fill="rgb(128,128,128)" stroke="#f0f0f0" stroke-width="2"/>
<text x="1493.0" y="1001.1" font-size="15.7" fill="#f4f4f4" text-anchor="middle" >50</text>
<rect x="1602.6" y="844" width="161" height="137" fill="rgb(153,153,153)" stroke="#f0f0f0" stroke-width="2"/>
<text x="1683.1" y="1001.1" font-size="15.7" fill="#f4f4f4" text-anchor="middle" >60</text>
<rect x="1792.7" y="844" width="161" height="137" fill="rgb(178,178,178)" stroke="#f0f0f0" stroke-width="2"/>
<text x="1873.2" y="1001.1" font-size="15.7" fill="#f4f4f4" text-anchor="middle" >70</text>
<rect x="1982.8" y="844" width="161" height="137" fill="rgb(204,204,204)" stroke="#f0f0f0" stroke-width="2"/>
<text x="2063.3" y="1001.1" font-size="15.7" fill="#f4f4f4" text-anchor="middle" >80</text>
<rect x="2172.9" y="844" width="161" height="137" fill="rgb(230,230,230)" stroke="#f0f0f0" stroke-width="2"/>
<text x="2253.4" y="1001.1" font-size="15.7" fill="#f4f4f4" text-anchor="middle" >90</text>
<rect x="2363.0" y="844" width="161" height="137" fill="rgb(255,255,255)" stroke="#f0f0f0" stroke-width="2"/>
<text x="2443.5" y="1001.1" font-size="15.7" fill="#f4f4f4" text-anchor="middle" >100</text>
<text x="330.0" y="1102.9" font-size="38.2" fill="#ececec" textLength="295.5" lengthAdjust="spacingAndGlyphs" >Current Reading</text>
<text x="330.0" y="1160.5" font-size="32.3" fill="#ececec" textLength="118.6" lengthAdjust="spacingAndGlyphs" >x: 0.313</text>
<text x="532.5" y="1160.5" font-size="32.3" fill="#ececec" textLength="138.5" lengthAdjust="spacingAndGlyphs" >y: 0.3283</text>
<text x="330.0" y="1206.4" font-size="32.3" fill="#ececec" textLength="149.0" lengthAdjust="spacingAndGlyphs" >u': 0.1983</text>
<text x="532.5" y="1206.4" font-size="32.3" fill="#ececec" textLength="128.5" lengthAdjust="spacingAndGlyphs" >v': 0.468</text>
<text x="330" y="1252.5" font-size="32.3" fill="#ececec" textLength="253" lengthAdjust="spacingAndGlyphs">cd/m²: 429.0357</text>
<text x="330.0" y="1298.6" font-size="32.3" fill="#ececec" textLength="207.6" lengthAdjust="spacingAndGlyphs" >ΔE 2000: 0.81</text>
<text x="942.0" y="1057.2" font-size="20.0" fill="#dcdcdc" text-anchor="middle" textLength="102.0" lengthAdjust="spacingAndGlyphs" >CIE 1931 xy</text>
<rect x="795" y="1064" width="340.5" height="224" fill="url(#cieMid)"/>
<rect x="795" y="1064" width="340.5" height="224" fill="url(#cieTop)" mask="url(#mkTop)"/>
<rect x="795" y="1064" width="340.5" height="224" fill="url(#cieBot)" mask="url(#mkBot)"/>
<rect x="795" y="1064" width="340.5" height="224" fill="none" stroke="#9a9a9a" stroke-width="2.5"/>
<clipPath id="cpC"><rect x="795" y="1064" width="340.5" height="224"/></clipPath>
<path d="M836,1289 Q985,1188 1136,1100" fill="none" stroke="#000" stroke-width="3.5" clip-path="url(#cpC)"/>
<line x1="810" y1="1288" x2="810" y2="1296" stroke="#aaa" stroke-width="2"/>
<text x="810.0" y="1317.6" font-size="17.6" fill="#dcdcdc" text-anchor="middle" textLength="38.0" lengthAdjust="spacingAndGlyphs" >0.29</text>
<line x1="878.3" y1="1288" x2="878.3" y2="1296" stroke="#aaa" stroke-width="2"/>
<text x="878.3" y="1317.6" font-size="17.6" fill="#dcdcdc" text-anchor="middle" textLength="26.0" lengthAdjust="spacingAndGlyphs" >0.3</text>
<line x1="945.7" y1="1288" x2="945.7" y2="1296" stroke="#aaa" stroke-width="2"/>
<text x="945.7" y="1317.6" font-size="17.6" fill="#dcdcdc" text-anchor="middle" textLength="38.0" lengthAdjust="spacingAndGlyphs" >0.31</text>
<line x1="1013.6" y1="1288" x2="1013.6" y2="1296" stroke="#aaa" stroke-width="2"/>
<text x="1013.6" y="1317.6" font-size="17.6" fill="#dcdcdc" text-anchor="middle" textLength="38.0" lengthAdjust="spacingAndGlyphs" >0.32</text>
<line x1="1082" y1="1288" x2="1082" y2="1296" stroke="#aaa" stroke-width="2"/>
<text x="1082.0" y="1317.6" font-size="17.6" fill="#dcdcdc" text-anchor="middle" textLength="38.0" lengthAdjust="spacingAndGlyphs" >0.33</text>
<line x1="786" y1="1128.6" x2="795" y2="1128.6" stroke="#aaa" stroke-width="2"/>
<text x="785.0" y="1135.1" font-size="17.6" fill="#dcdcdc" text-anchor="end" textLength="37.6" lengthAdjust="spacingAndGlyphs" >0.34</text>
<line x1="786" y1="1218.4" x2="795" y2="1218.4" stroke="#aaa" stroke-width="2"/>
<text x="785.0" y="1224.9" font-size="17.6" fill="#dcdcdc" text-anchor="end" textLength="37.6" lengthAdjust="spacingAndGlyphs" >0.32</text>
<rect x="955.5" y="1166.5" width="19" height="17.5" fill="none" stroke="#000" stroke-width="2.2"/>
<circle cx="973.3" cy="1167" r="6.5" fill="#2a2a2a" stroke="#111" stroke-width="1"/>
<circle cx="956" cy="1175.6" r="6.5" fill="#222" stroke="#111" stroke-width="1"/>
<circle cx="963" cy="1177" r="6.5" fill="#555" stroke="#222" stroke-width="1"/>
<circle cx="966" cy="1178.7" r="6" fill="#fff" stroke="#333" stroke-width="1.5"/>
<rect x="1149" y="1024.5" width="1157" height="286.5" fill="#000" />
<rect x="1151" y="1026.0" width="1153" height="33" fill="url(#gTHead)" />
<text x="1365.2" y="1048.8" font-size="17.3" fill="#f0f0f0" text-anchor="middle" >0</text>
<text x="1459.0" y="1048.8" font-size="17.3" fill="#f0f0f0" text-anchor="middle" >10</text>
<text x="1548.0" y="1048.8" font-size="17.3" fill="#f0f0f0" text-anchor="middle" >20</text>
<text x="1637.0" y="1048.8" font-size="17.3" fill="#f0f0f0" text-anchor="middle" >30</text>
<text x="1726.0" y="1048.8" font-size="17.3" fill="#f0f0f0" text-anchor="middle" >40</text>
<text x="1815.0" y="1048.8" font-size="17.3" fill="#f0f0f0" text-anchor="middle" >50</text>
<text x="1904.0" y="1048.8" font-size="17.3" fill="#f0f0f0" text-anchor="middle" >60</text>
<text x="1993.0" y="1048.8" font-size="17.3" fill="#f0f0f0" text-anchor="middle" >70</text>
<text x="2082.0" y="1048.8" font-size="17.3" fill="#f0f0f0" text-anchor="middle" >80</text>
<text x="2171.0" y="1048.8" font-size="17.3" fill="#f0f0f0" text-anchor="middle" >90</text>
<text x="2259.8" y="1048.8" font-size="17.3" fill="#f0f0f0" text-anchor="middle" >100</text>
<rect x="1151" y="1059.0" width="1153" height="32.0" fill="url(#gRowD)" />
<text x="1163.6" y="1082.5" font-size="20.2" fill="#f4f4f4" font-weight="bold" textLength="64.8" lengthAdjust="spacingAndGlyphs" >x: CIE31</text>
<text x="1320.0" y="1082.5" font-size="19.6" fill="#f2f2f2" textLength="51.0" lengthAdjust="spacingAndGlyphs" >0.2437</text>
<text x="1418.5" y="1082.5" font-size="19.6" fill="#f2f2f2" textLength="51.0" lengthAdjust="spacingAndGlyphs" >0.3113</text>
<text x="1507.5" y="1082.5" font-size="19.6" fill="#f2f2f2" textLength="51.0" lengthAdjust="spacingAndGlyphs" >0.3140</text>
<text x="1596.5" y="1082.5" font-size="19.6" fill="#f2f2f2" textLength="51.0" lengthAdjust="spacingAndGlyphs" >0.3129</text>
<text x="1685.5" y="1082.5" font-size="19.6" fill="#f2f2f2" textLength="51.0" lengthAdjust="spacingAndGlyphs" >0.3127</text>
<text x="1774.5" y="1082.5" font-size="19.6" fill="#f2f2f2" textLength="51.0" lengthAdjust="spacingAndGlyphs" >0.3135</text>
<text x="1863.5" y="1082.5" font-size="19.6" fill="#f2f2f2" textLength="51.0" lengthAdjust="spacingAndGlyphs" >0.3131</text>
<text x="1952.5" y="1082.5" font-size="19.6" fill="#f2f2f2" textLength="51.0" lengthAdjust="spacingAndGlyphs" >0.3129</text>
<text x="2041.5" y="1082.5" font-size="19.6" fill="#f2f2f2" textLength="51.0" lengthAdjust="spacingAndGlyphs" >0.3132</text>
<text x="2130.5" y="1082.5" font-size="19.6" fill="#f2f2f2" textLength="51.0" lengthAdjust="spacingAndGlyphs" >0.3132</text>
<text x="2219.5" y="1082.5" font-size="19.6" fill="#f2f2f2" textLength="51.0" lengthAdjust="spacingAndGlyphs" >0.3130</text>
<rect x="1151" y="1091.0" width="1153" height="31.5" fill="url(#gRowL)" />
<text x="1163.6" y="1114.2" font-size="20.2" fill="#f4f4f4" font-weight="bold" textLength="64.8" lengthAdjust="spacingAndGlyphs" >y: CIE31</text>
<text x="1320.0" y="1114.2" font-size="19.6" fill="#f2f2f2" textLength="51.0" lengthAdjust="spacingAndGlyphs" >0.2459</text>
<text x="1418.5" y="1114.2" font-size="19.6" fill="#f2f2f2" textLength="51.0" lengthAdjust="spacingAndGlyphs" >0.3289</text>
<text x="1507.5" y="1114.2" font-size="19.6" fill="#f2f2f2" textLength="51.0" lengthAdjust="spacingAndGlyphs" >0.3306</text>
<text x="1596.5" y="1114.2" font-size="19.6" fill="#f2f2f2" textLength="51.0" lengthAdjust="spacingAndGlyphs" >0.3281</text>
<text x="1685.5" y="1114.2" font-size="19.6" fill="#f2f2f2" textLength="51.0" lengthAdjust="spacingAndGlyphs" >0.3279</text>
<text x="1774.5" y="1114.2" font-size="19.6" fill="#f2f2f2" textLength="51.0" lengthAdjust="spacingAndGlyphs" >0.3293</text>
<text x="1863.5" y="1114.2" font-size="19.6" fill="#f2f2f2" textLength="51.0" lengthAdjust="spacingAndGlyphs" >0.3285</text>
<text x="1952.5" y="1114.2" font-size="19.6" fill="#f2f2f2" textLength="51.0" lengthAdjust="spacingAndGlyphs" >0.3283</text>
<text x="2041.5" y="1114.2" font-size="19.6" fill="#f2f2f2" textLength="51.0" lengthAdjust="spacingAndGlyphs" >0.3288</text>
<text x="2130.5" y="1114.2" font-size="19.6" fill="#f2f2f2" textLength="51.0" lengthAdjust="spacingAndGlyphs" >0.3288</text>
<text x="2219.5" y="1114.2" font-size="19.6" fill="#f2f2f2" textLength="51.0" lengthAdjust="spacingAndGlyphs" >0.3283</text>
<rect x="1151" y="1122.5" width="1153" height="31.5" fill="url(#gRowD)" />
<text x="1163.6" y="1145.8" font-size="20.2" fill="#f4f4f4" font-weight="bold" textLength="11.0" lengthAdjust="spacingAndGlyphs" >Y</text>
<text x="1320.0" y="1145.8" font-size="19.6" fill="#f2f2f2" textLength="51.0" lengthAdjust="spacingAndGlyphs" >0.2525</text>
<text x="1418.5" y="1145.8" font-size="19.6" fill="#f2f2f2" textLength="51.0" lengthAdjust="spacingAndGlyphs" >4.6265</text>
<text x="1507.5" y="1145.8" font-size="19.6" fill="#f2f2f2" textLength="60.4" lengthAdjust="spacingAndGlyphs" >14.3486</text>
<text x="1596.5" y="1145.8" font-size="19.6" fill="#f2f2f2" textLength="60.4" lengthAdjust="spacingAndGlyphs" >31.0013</text>
<text x="1685.5" y="1145.8" font-size="19.6" fill="#f2f2f2" textLength="60.4" lengthAdjust="spacingAndGlyphs" >57.4073</text>
<text x="1774.5" y="1145.8" font-size="19.6" fill="#f2f2f2" textLength="60.4" lengthAdjust="spacingAndGlyphs" >93.0060</text>
<text x="1863.5" y="1145.8" font-size="19.6" fill="#f2f2f2" textLength="69.8" lengthAdjust="spacingAndGlyphs" >137.8122</text>
<text x="1952.5" y="1145.8" font-size="19.6" fill="#f2f2f2" textLength="69.8" lengthAdjust="spacingAndGlyphs" >192.1958</text>
<text x="2041.5" y="1145.8" font-size="19.6" fill="#f2f2f2" textLength="69.8" lengthAdjust="spacingAndGlyphs" >260.0120</text>
<text x="2130.5" y="1145.8" font-size="19.6" fill="#f2f2f2" textLength="69.8" lengthAdjust="spacingAndGlyphs" >338.3327</text>
<text x="2219.5" y="1145.8" font-size="19.6" fill="#f2f2f2" textLength="69.8" lengthAdjust="spacingAndGlyphs" >429.0357</text>
<rect x="1151" y="1154.0" width="1153" height="31.5" fill="url(#gRowL)" />
<text x="1163.6" y="1177.2" font-size="20.2" fill="#f4f4f4" font-weight="bold" textLength="68.7" lengthAdjust="spacingAndGlyphs" >Target Y</text>
<text x="1320.0" y="1177.2" font-size="19.6" fill="#f2f2f2" textLength="51.0" lengthAdjust="spacingAndGlyphs" >0.0000</text>
<text x="1418.5" y="1177.2" font-size="19.6" fill="#f2f2f2" textLength="51.0" lengthAdjust="spacingAndGlyphs" >4.4319</text>
<text x="1507.5" y="1177.2" font-size="19.6" fill="#f2f2f2" textLength="60.4" lengthAdjust="spacingAndGlyphs" >14.2031</text>
<text x="1596.5" y="1177.2" font-size="19.6" fill="#f2f2f2" textLength="60.4" lengthAdjust="spacingAndGlyphs" >31.0072</text>
<text x="1685.5" y="1177.2" font-size="19.6" fill="#f2f2f2" textLength="60.4" lengthAdjust="spacingAndGlyphs" >57.0053</text>
<text x="1774.5" y="1177.2" font-size="19.6" fill="#f2f2f2" textLength="60.4" lengthAdjust="spacingAndGlyphs" >92.6119</text>
<text x="1863.5" y="1177.2" font-size="19.6" fill="#f2f2f2" textLength="69.8" lengthAdjust="spacingAndGlyphs" >136.6679</text>
<text x="1952.5" y="1177.2" font-size="19.6" fill="#f2f2f2" textLength="69.8" lengthAdjust="spacingAndGlyphs" >191.0072</text>
<text x="2041.5" y="1177.2" font-size="19.6" fill="#f2f2f2" textLength="69.8" lengthAdjust="spacingAndGlyphs" >259.0635</text>
<text x="2130.5" y="1177.2" font-size="19.6" fill="#f2f2f2" textLength="69.8" lengthAdjust="spacingAndGlyphs" >339.4951</text>
<text x="2219.5" y="1177.2" font-size="19.6" fill="#f2f2f2" textLength="69.8" lengthAdjust="spacingAndGlyphs" >429.0357</text>
<rect x="1151" y="1185.5" width="1153" height="31.5" fill="url(#gRowD)" />
<text x="1163.6" y="1208.8" font-size="20.2" fill="#f4f4f4" font-weight="bold" textLength="138.0" lengthAdjust="spacingAndGlyphs" >Gamma Log/Log</text>
<text x="1320.0" y="1208.8" font-size="19.6" fill="#f2f2f2" textLength="51.0" lengthAdjust="spacingAndGlyphs" >1.2778</text>
<text x="1418.5" y="1208.8" font-size="19.6" fill="#f2f2f2" textLength="51.0" lengthAdjust="spacingAndGlyphs" >1.9840</text>
<text x="1507.5" y="1208.8" font-size="19.6" fill="#f2f2f2" textLength="51.0" lengthAdjust="spacingAndGlyphs" >2.1112</text>
<text x="1596.5" y="1208.8" font-size="19.6" fill="#f2f2f2" textLength="51.0" lengthAdjust="spacingAndGlyphs" >2.1705</text>
<text x="1685.5" y="1208.8" font-size="19.6" fill="#f2f2f2" textLength="51.0" lengthAdjust="spacingAndGlyphs" >2.1951</text>
<text x="1774.5" y="1208.8" font-size="19.6" fill="#f2f2f2" textLength="51.0" lengthAdjust="spacingAndGlyphs" >2.2182</text>
<text x="1863.5" y="1208.8" font-size="19.6" fill="#f2f2f2" textLength="51.0" lengthAdjust="spacingAndGlyphs" >2.2232</text>
<text x="1952.5" y="1208.8" font-size="19.6" fill="#f2f2f2" textLength="51.0" lengthAdjust="spacingAndGlyphs" >2.2339</text>
<text x="2041.5" y="1208.8" font-size="19.6" fill="#f2f2f2" textLength="51.0" lengthAdjust="spacingAndGlyphs" >2.2444</text>
<text x="2130.5" y="1208.8" font-size="19.6" fill="#f2f2f2" textLength="51.0" lengthAdjust="spacingAndGlyphs" >2.3018</text>
<text x="2219.5" y="1208.8" font-size="19.6" fill="#f2f2f2" textLength="51.0" lengthAdjust="spacingAndGlyphs" >2.2749</text>
<rect x="1151" y="1217.0" width="1153" height="31.3" fill="url(#gRowL)" />
<text x="1163.6" y="1240.2" font-size="20.2" fill="#f4f4f4" font-weight="bold" textLength="31.5" lengthAdjust="spacingAndGlyphs" >CCT</text>
<text x="1320.0" y="1240.2" font-size="19.6" fill="#f2f2f2" textLength="88.6" lengthAdjust="spacingAndGlyphs" >24691.0000</text>
<text x="1418.5" y="1240.2" font-size="19.6" fill="#f2f2f2" textLength="79.2" lengthAdjust="spacingAndGlyphs" >6583.0000</text>
<text x="1507.5" y="1240.2" font-size="19.6" fill="#f2f2f2" textLength="79.2" lengthAdjust="spacingAndGlyphs" >6420.0000</text>
<rect x="1592.5" y="1218.5" width="88" height="28" fill="#f4f4f4" stroke="#bbb" stroke-width="1"/>
<text x="1596.5" y="1240.2" font-size="19.6" fill="#000" textLength="79.2" lengthAdjust="spacingAndGlyphs" >6499.0000</text>
<text x="1685.5" y="1240.2" font-size="19.6" fill="#f2f2f2" textLength="79.2" lengthAdjust="spacingAndGlyphs" >6512.0000</text>
<text x="1774.5" y="1240.2" font-size="19.6" fill="#f2f2f2" textLength="79.2" lengthAdjust="spacingAndGlyphs" >6461.0000</text>
<text x="1863.5" y="1240.2" font-size="19.6" fill="#f2f2f2" textLength="79.2" lengthAdjust="spacingAndGlyphs" >6489.0000</text>
<text x="1952.5" y="1240.2" font-size="19.6" fill="#f2f2f2" textLength="79.2" lengthAdjust="spacingAndGlyphs" >6500.0000</text>
<text x="2041.5" y="1240.2" font-size="19.6" fill="#f2f2f2" textLength="79.2" lengthAdjust="spacingAndGlyphs" >6480.0000</text>
<text x="2130.5" y="1240.2" font-size="19.6" fill="#f2f2f2" textLength="79.2" lengthAdjust="spacingAndGlyphs" >6479.0000</text>
<text x="2219.5" y="1240.2" font-size="19.6" fill="#f2f2f2" textLength="79.2" lengthAdjust="spacingAndGlyphs" >6493.0000</text>
<rect x="1151" y="1248.3" width="1153" height="31.2" fill="url(#gRowD)" />
<text x="1163.6" y="1271.4" font-size="20.2" fill="#f4f4f4" font-weight="bold" textLength="67.6" lengthAdjust="spacingAndGlyphs" >ΔE 2000</text>
<text x="1320.0" y="1271.4" font-size="19.6" fill="#f2f2f2" textLength="51.0" lengthAdjust="spacingAndGlyphs" >0.8819</text>
<text x="1418.5" y="1271.4" font-size="19.6" fill="#f2f2f2" textLength="51.0" lengthAdjust="spacingAndGlyphs" >0.3298</text>
<text x="1507.5" y="1271.4" font-size="19.6" fill="#f2f2f2" textLength="51.0" lengthAdjust="spacingAndGlyphs" >0.2960</text>
<text x="1596.5" y="1271.4" font-size="19.6" fill="#f2f2f2" textLength="51.0" lengthAdjust="spacingAndGlyphs" >0.3634</text>
<text x="1685.5" y="1271.4" font-size="19.6" fill="#f2f2f2" textLength="51.0" lengthAdjust="spacingAndGlyphs" >0.4885</text>
<text x="1774.5" y="1271.4" font-size="19.6" fill="#f2f2f2" textLength="51.0" lengthAdjust="spacingAndGlyphs" >0.2765</text>
<text x="1863.5" y="1271.4" font-size="19.6" fill="#f2f2f2" textLength="51.0" lengthAdjust="spacingAndGlyphs" >0.4983</text>
<text x="1952.5" y="1271.4" font-size="19.6" fill="#f2f2f2" textLength="51.0" lengthAdjust="spacingAndGlyphs" >0.5448</text>
<text x="2041.5" y="1271.4" font-size="19.6" fill="#f2f2f2" textLength="51.0" lengthAdjust="spacingAndGlyphs" >0.4192</text>
<text x="2130.5" y="1271.4" font-size="19.6" fill="#f2f2f2" textLength="51.0" lengthAdjust="spacingAndGlyphs" >0.5355</text>
<text x="2219.5" y="1271.4" font-size="19.6" fill="#f2f2f2" textLength="51.0" lengthAdjust="spacingAndGlyphs" >0.8140</text>
<rect x="1151" y="1279.5" width="1153" height="31.5" fill="url(#gRowL)" />
<text x="1163.6" y="1302.8" font-size="20.2" fill="#f4f4f4" font-weight="bold" textLength="54.0" lengthAdjust="spacingAndGlyphs" >ΔE ITP</text>
<text x="1320.0" y="1302.8" font-size="19.6" fill="#f2f2f2" textLength="60.4" lengthAdjust="spacingAndGlyphs" >67.8689</text>
<text x="1418.5" y="1302.8" font-size="19.6" fill="#f2f2f2" textLength="51.0" lengthAdjust="spacingAndGlyphs" >2.2295</text>
<text x="1507.5" y="1302.8" font-size="19.6" fill="#f2f2f2" textLength="51.0" lengthAdjust="spacingAndGlyphs" >0.8785</text>
<text x="1596.5" y="1302.8" font-size="19.6" fill="#f2f2f2" textLength="51.0" lengthAdjust="spacingAndGlyphs" >0.4313</text>
<text x="1685.5" y="1302.8" font-size="19.6" fill="#f2f2f2" textLength="51.0" lengthAdjust="spacingAndGlyphs" >0.6976</text>
<text x="1774.5" y="1302.8" font-size="19.6" fill="#f2f2f2" textLength="51.0" lengthAdjust="spacingAndGlyphs" >0.5245</text>
<text x="1863.5" y="1302.8" font-size="19.6" fill="#f2f2f2" textLength="51.0" lengthAdjust="spacingAndGlyphs" >0.7532</text>
<text x="1952.5" y="1302.8" font-size="19.6" fill="#f2f2f2" textLength="51.0" lengthAdjust="spacingAndGlyphs" >0.6252</text>
<text x="2041.5" y="1302.8" font-size="19.6" fill="#f2f2f2" textLength="51.0" lengthAdjust="spacingAndGlyphs" >0.4608</text>
<text x="2130.5" y="1302.8" font-size="19.6" fill="#f2f2f2" textLength="51.0" lengthAdjust="spacingAndGlyphs" >0.4842</text>
<text x="2219.5" y="1302.8" font-size="19.6" fill="#f2f2f2" textLength="51.0" lengthAdjust="spacingAndGlyphs" >0.4966</text>
<rect x="300" y="1435" width="2260" height="93" fill="#2e2e2e" />
<rect x="302" y="1435" width="158" height="92" rx="7" fill="url(#gBB)"/>
<rect x="309" y="1442.5" width="144" height="54" rx="6" fill="rgb(0,0,0)" stroke="rgba(0,0,0,0.25)" stroke-width="1.5"/>
<text x="381.0" y="1520.0" font-size="17.0" fill="#353535" text-anchor="middle" font-weight="bold" >0</text>
<rect x="463" y="1435" width="158" height="92" rx="7" fill="url(#gBB)"/>
<rect x="470" y="1442.5" width="144" height="54" rx="6" fill="rgb(26,26,26)" stroke="rgba(0,0,0,0.25)" stroke-width="1.5"/>
<text x="542.0" y="1520.0" font-size="17.0" fill="#353535" text-anchor="middle" font-weight="bold" >10</text>
<rect x="624" y="1435" width="158" height="92" rx="7" fill="url(#gBB)"/>
<rect x="631" y="1442.5" width="144" height="54" rx="6" fill="rgb(51,51,51)" stroke="rgba(0,0,0,0.25)" stroke-width="1.5"/>
<text x="703.0" y="1520.0" font-size="17.0" fill="#353535" text-anchor="middle" font-weight="bold" >20</text>
<rect x="785" y="1435" width="158" height="92" rx="7" fill="url(#gBB)"/>
<rect x="792" y="1442.5" width="144" height="54" rx="6" fill="rgb(76,76,76)" stroke="rgba(0,0,0,0.25)" stroke-width="1.5"/>
<text x="864.0" y="1520.0" font-size="17.0" fill="#353535" text-anchor="middle" font-weight="bold" >30</text>
<rect x="946" y="1435" width="158" height="92" rx="7" fill="url(#gBB)"/>
<rect x="953" y="1442.5" width="144" height="54" rx="6" fill="rgb(102,102,102)" stroke="rgba(0,0,0,0.25)" stroke-width="1.5"/>
<text x="1025.0" y="1520.0" font-size="17.0" fill="#353535" text-anchor="middle" font-weight="bold" >40</text>
<rect x="1107" y="1435" width="158" height="92" rx="7" fill="url(#gBB)"/>
<rect x="1114" y="1442.5" width="144" height="54" rx="6" fill="rgb(128,128,128)" stroke="rgba(0,0,0,0.25)" stroke-width="1.5"/>
<text x="1186.0" y="1520.0" font-size="17.0" fill="#353535" text-anchor="middle" font-weight="bold" >50</text>
<rect x="1268" y="1435" width="158" height="92" rx="7" fill="url(#gBB)"/>
<rect x="1275" y="1442.5" width="144" height="54" rx="6" fill="rgb(153,153,153)" stroke="rgba(0,0,0,0.25)" stroke-width="1.5"/>
<text x="1347.0" y="1520.0" font-size="17.0" fill="#353535" text-anchor="middle" font-weight="bold" >60</text>
<rect x="1429" y="1435" width="158" height="92" rx="7" fill="url(#gBB)"/>
<rect x="1436" y="1442.5" width="144" height="54" rx="6" fill="rgb(178,178,178)" stroke="rgba(0,0,0,0.25)" stroke-width="1.5"/>
<text x="1508.0" y="1520.0" font-size="17.0" fill="#353535" text-anchor="middle" font-weight="bold" >70</text>
<rect x="1590" y="1435" width="158" height="92" rx="7" fill="url(#gBB)"/>
<rect x="1597" y="1442.5" width="144" height="54" rx="6" fill="rgb(204,204,204)" stroke="rgba(0,0,0,0.25)" stroke-width="1.5"/>
<text x="1669.0" y="1520.0" font-size="17.0" fill="#353535" text-anchor="middle" font-weight="bold" >80</text>
<rect x="1751" y="1435" width="158" height="92" rx="7" fill="url(#gBB)"/>
<rect x="1758" y="1442.5" width="144" height="54" rx="6" fill="rgb(230,230,230)" stroke="rgba(0,0,0,0.25)" stroke-width="1.5"/>
<text x="1830.0" y="1520.0" font-size="17.0" fill="#353535" text-anchor="middle" font-weight="bold" >90</text>
<rect x="1912" y="1435" width="158" height="92" rx="7" fill="url(#gSel)"/>
<rect x="1919" y="1442.5" width="144" height="54" rx="6" fill="#fff"/>
<text x="1991.0" y="1520.0" font-size="17.0" fill="#ffffff" text-anchor="middle" font-weight="bold" >100</text>
<rect x="2075.5" y="1435" width="72" height="92" rx="7" fill="url(#gBB)"/>
<line x1="2076" y1="1462" x2="2147" y2="1462" stroke="#555" stroke-width="1.5"/>
<circle cx="2111.5" cy="1448.5" r="11" fill="#888" opacity="0.7"/>
<path d="M2104.5,1452 h14 l-7,-8 z" fill="#222"/>
<rect x="2089" y="1472" width="45" height="47" rx="7" fill="#999" stroke="#222" stroke-width="3"/>
<rect x="2101" y="1485" width="21" height="21" fill="#000"/>
<path d="M2155,1435 H2560 V1526 H2155 A6,6 0 0 1 2149,1520 V1441 A6,6 0 0 1 2155,1435 Z" fill="url(#gGL)"/>
<path d="M2155,1435 H2560 V1480 H2149 V1441 A6,6 0 0 1 2155,1435 Z" fill="url(#gGU)"/>
<line x1="2218" y1="1435" x2="2218" y2="1480" stroke="#2a2a2a" stroke-width="1.3"/>
<line x1="2285.6" y1="1435" x2="2285.6" y2="1480" stroke="#2a2a2a" stroke-width="1.3"/>
<line x1="2353" y1="1435" x2="2353" y2="1480" stroke="#2a2a2a" stroke-width="1.3"/>
<line x1="2420.7" y1="1435" x2="2420.7" y2="1480" stroke="#2a2a2a" stroke-width="1.3"/>
<line x1="2488.3" y1="1435" x2="2488.3" y2="1480" stroke="#2a2a2a" stroke-width="1.3"/>
<line x1="2149" y1="1480" x2="2560" y2="1480" stroke="#2a2a2a" stroke-width="1.5"/>
<line x1="2353" y1="1480" x2="2353" y2="1526" stroke="#2a2a2a" stroke-width="1.3"/>
<circle cx="2183.5" cy="1452" r="13" fill="url(#gIc)" opacity="0.9"/>
<circle cx="2251.8" cy="1452" r="13" fill="url(#gIc)" opacity="0.9"/>
<circle cx="2319.3" cy="1452" r="13" fill="url(#gIc)" opacity="0.9"/>
<circle cx="2386.9" cy="1452" r="13" fill="url(#gIc)" opacity="0.9"/>
<circle cx="2454.5" cy="1452" r="13" fill="url(#gIc)" opacity="0.9"/>
<circle cx="2522" cy="1452" r="13" fill="url(#gIc)" opacity="0.9"/>
<path d="M2248,1445 L2258,1452 L2248,1459 Z" fill="#2a2a2a"/>
<path d="M2314,1446 v12 M2325,1446 v12 M2314,1446 h3 M2314,1458 h3 M2325,1446 h-3 M2325,1458 h-3" stroke="#333" stroke-width="1.8" fill="none"/>
<path d="M2381,1452 c3,-5 8,-5 11,0 c-3,5 -8,5 -11,0 z" stroke="#333" stroke-width="1.8" fill="none"/>
<path d="M2460,1448 a7,7 0 1 0 1,7" stroke="#333" stroke-width="2" fill="none"/><path d="M2457,1446 l5,-2 l1,5 z" fill="#333"/>
<circle cx="2195.7" cy="1504" r="13" fill="url(#gIc)" opacity="0.9"/>
<circle cx="2515.8" cy="1504" r="13" fill="url(#gIc)" opacity="0.9"/>
<path d="M2199,1498 l-6,6 l6,6" fill="none" stroke="#333" stroke-width="2.5"/>
<text x="2237.0" y="1515.5" font-size="34.0" fill="#303030" textLength="74.0" lengthAdjust="spacingAndGlyphs" >Back</text>
<text x="2395.7" y="1515.5" font-size="34.0" fill="#303030" textLength="77.0" lengthAdjust="spacingAndGlyphs" >Next</text>
<path d="M2509,1498 l6,6 l-6,6 M2516,1498 l6,6 l-6,6" fill="none" stroke="#333" stroke-width="2.5"/>
<g opacity="0.9">
<path d="M2188,1490 L2227,1486 L2225,1456 L2174,1446 L2177,1494 L2208,1509.5 L2263,1494 L2232,1487.5" fill="none" stroke="#e6e6e6" stroke-width="7" stroke-linejoin="round" stroke-linecap="round" opacity="0.8"/>
<path d="M2188,1490 L2227,1486 L2225,1456 L2174,1446 L2177,1494 L2208,1509.5 L2263,1494 L2232,1487.5" fill="none" stroke="#9c3c42" stroke-width="4.5" stroke-linejoin="round" stroke-linecap="round"/>
<path d="M2190,1464 Q2199,1459 2204.5,1481 L2232,1447" fill="none" stroke="#e0e0e0" stroke-width="7.5" stroke-linecap="round" stroke-linejoin="round" opacity="0.8"/>
<path d="M2190,1464 Q2199,1459 2204.5,1481 L2232,1447" fill="none" stroke="#474747" stroke-width="5" stroke-linecap="round" stroke-linejoin="round"/>
<text x="2232" y="1484" font-size="36" font-weight="bold" fill="none" stroke="#e0e0e0" stroke-width="4" stroke-linejoin="round" textLength="199" lengthAdjust="spacingAndGlyphs" opacity="0.85">NOTEBOOK</text>
<text x="2232" y="1484" font-size="36" font-weight="bold" fill="#9a3c42" stroke="#9a3c42" stroke-width="1.2" textLength="199" lengthAdjust="spacingAndGlyphs">NOTEBOOK</text>
<text x="2433" y="1484" font-size="36" font-weight="bold" fill="#505050" stroke="#e0e0e0" stroke-width="1.6" textLength="116" lengthAdjust="spacingAndGlyphs">CHECK</text>
</g>
<rect x="2550" y="87" width="10" height="1441" fill="url(#gRS)"/>
</svg>
</body></html>
